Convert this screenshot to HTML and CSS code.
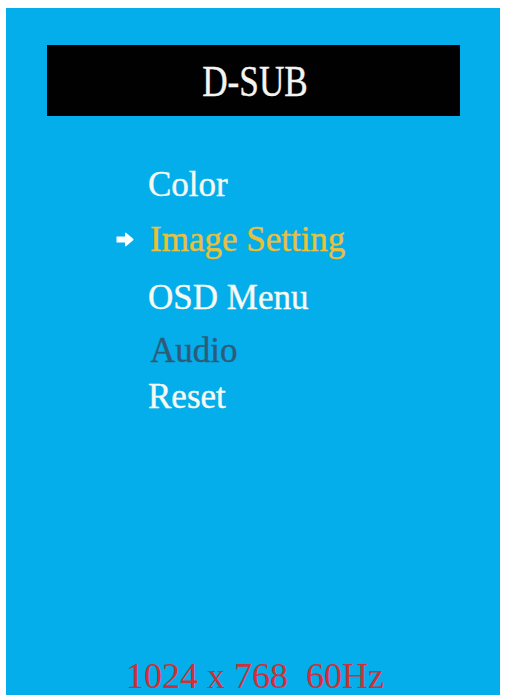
FILE: index.html
```html
<!DOCTYPE html>
<html lang="en">
<head>
<meta charset="utf-8">
<title>D-SUB OSD</title>
<link rel="stylesheet" href="styles.css">
</head>
<body>
<div class="osd">
  <div class="title-bar"><span class="title">D-SUB</span></div>
  <ul class="menu">
    <li class="item item-color">Color</li>
    <li class="item item-image active">
      <svg class="pointer" width="18" height="15" viewBox="0 0 18 15" aria-hidden="true">
        <path d="M0.5 4.5 H9 V1 Q9.6 0.2 10.4 0.9 L17.2 6.8 Q17.8 7.5 17.2 8.2 L10.4 14.1 Q9.6 14.8 9 14 V10.5 H0.5 Z" fill="#ffffff"/>
      </svg>Image Setting</li>
    <li class="item item-osd">OSD Menu</li>
    <li class="item item-audio disabled">Audio</li>
    <li class="item item-reset">Reset</li>
  </ul>
  <div class="status">1024 x 768&nbsp;&nbsp;60Hz</div>
</div>
</body>
</html>
```

FILE: styles.css
```css
html, body {
  margin: 0;
  padding: 0;
  background: #ffffff;
}

body {
  width: 506px;
  height: 695px;
  overflow: hidden;
  font-family: "Liberation Serif", "Times New Roman", serif;
}

.osd {
  margin: 8px 0 0 6px;
  width: 494px;
  height: 687px;
  background: #04aeeb;
  box-sizing: border-box;
  padding-top: 37px;
  padding-bottom: 2px;
  display: flex;
  flex-direction: column;
  overflow: hidden;
}

.title-bar {
  margin-left: 41px;
  width: 413px;
  height: 71px;
  background: #010101;
  display: flex;
  align-items: center;
  justify-content: center;
}

.title {
  color: #f4f4f0;
  font-size: 44px;
  line-height: 44px;
  display: inline-block;
  transform: scaleX(0.8);
  margin-left: 4px;
  margin-top: 2px;
  -webkit-text-stroke: 0.4px #f4f4f0;
}

.menu {
  list-style: none;
  margin: 49px 0 0 0;
  padding: 0 0 0 142px;
  display: flex;
  flex-direction: column;
}

.item {
  position: relative;
  font-size: 35px;
  line-height: 40px;
  height: 40px;
  color: #f6faf2;
  -webkit-text-stroke: 0.4px currentColor;
  white-space: nowrap;
}

.item-image { margin-top: 15px; padding-left: 2px; }
.item-osd { margin-top: 18px; }
.item-audio { margin-top: 13px; padding-left: 2px; }
.item-reset { margin-top: 6px; }

.active {
  color: #e9c03c;
}

.disabled {
  color: #2d5c79;
}

.pointer {
  position: absolute;
  left: -32px;
  top: 12px;
}

.status {
  margin-top: auto;
  text-align: center;
  padding-left: 4px;
  color: #cf3037;
  font-size: 36px;
  line-height: 34px;
  height: 34px;
}
```
